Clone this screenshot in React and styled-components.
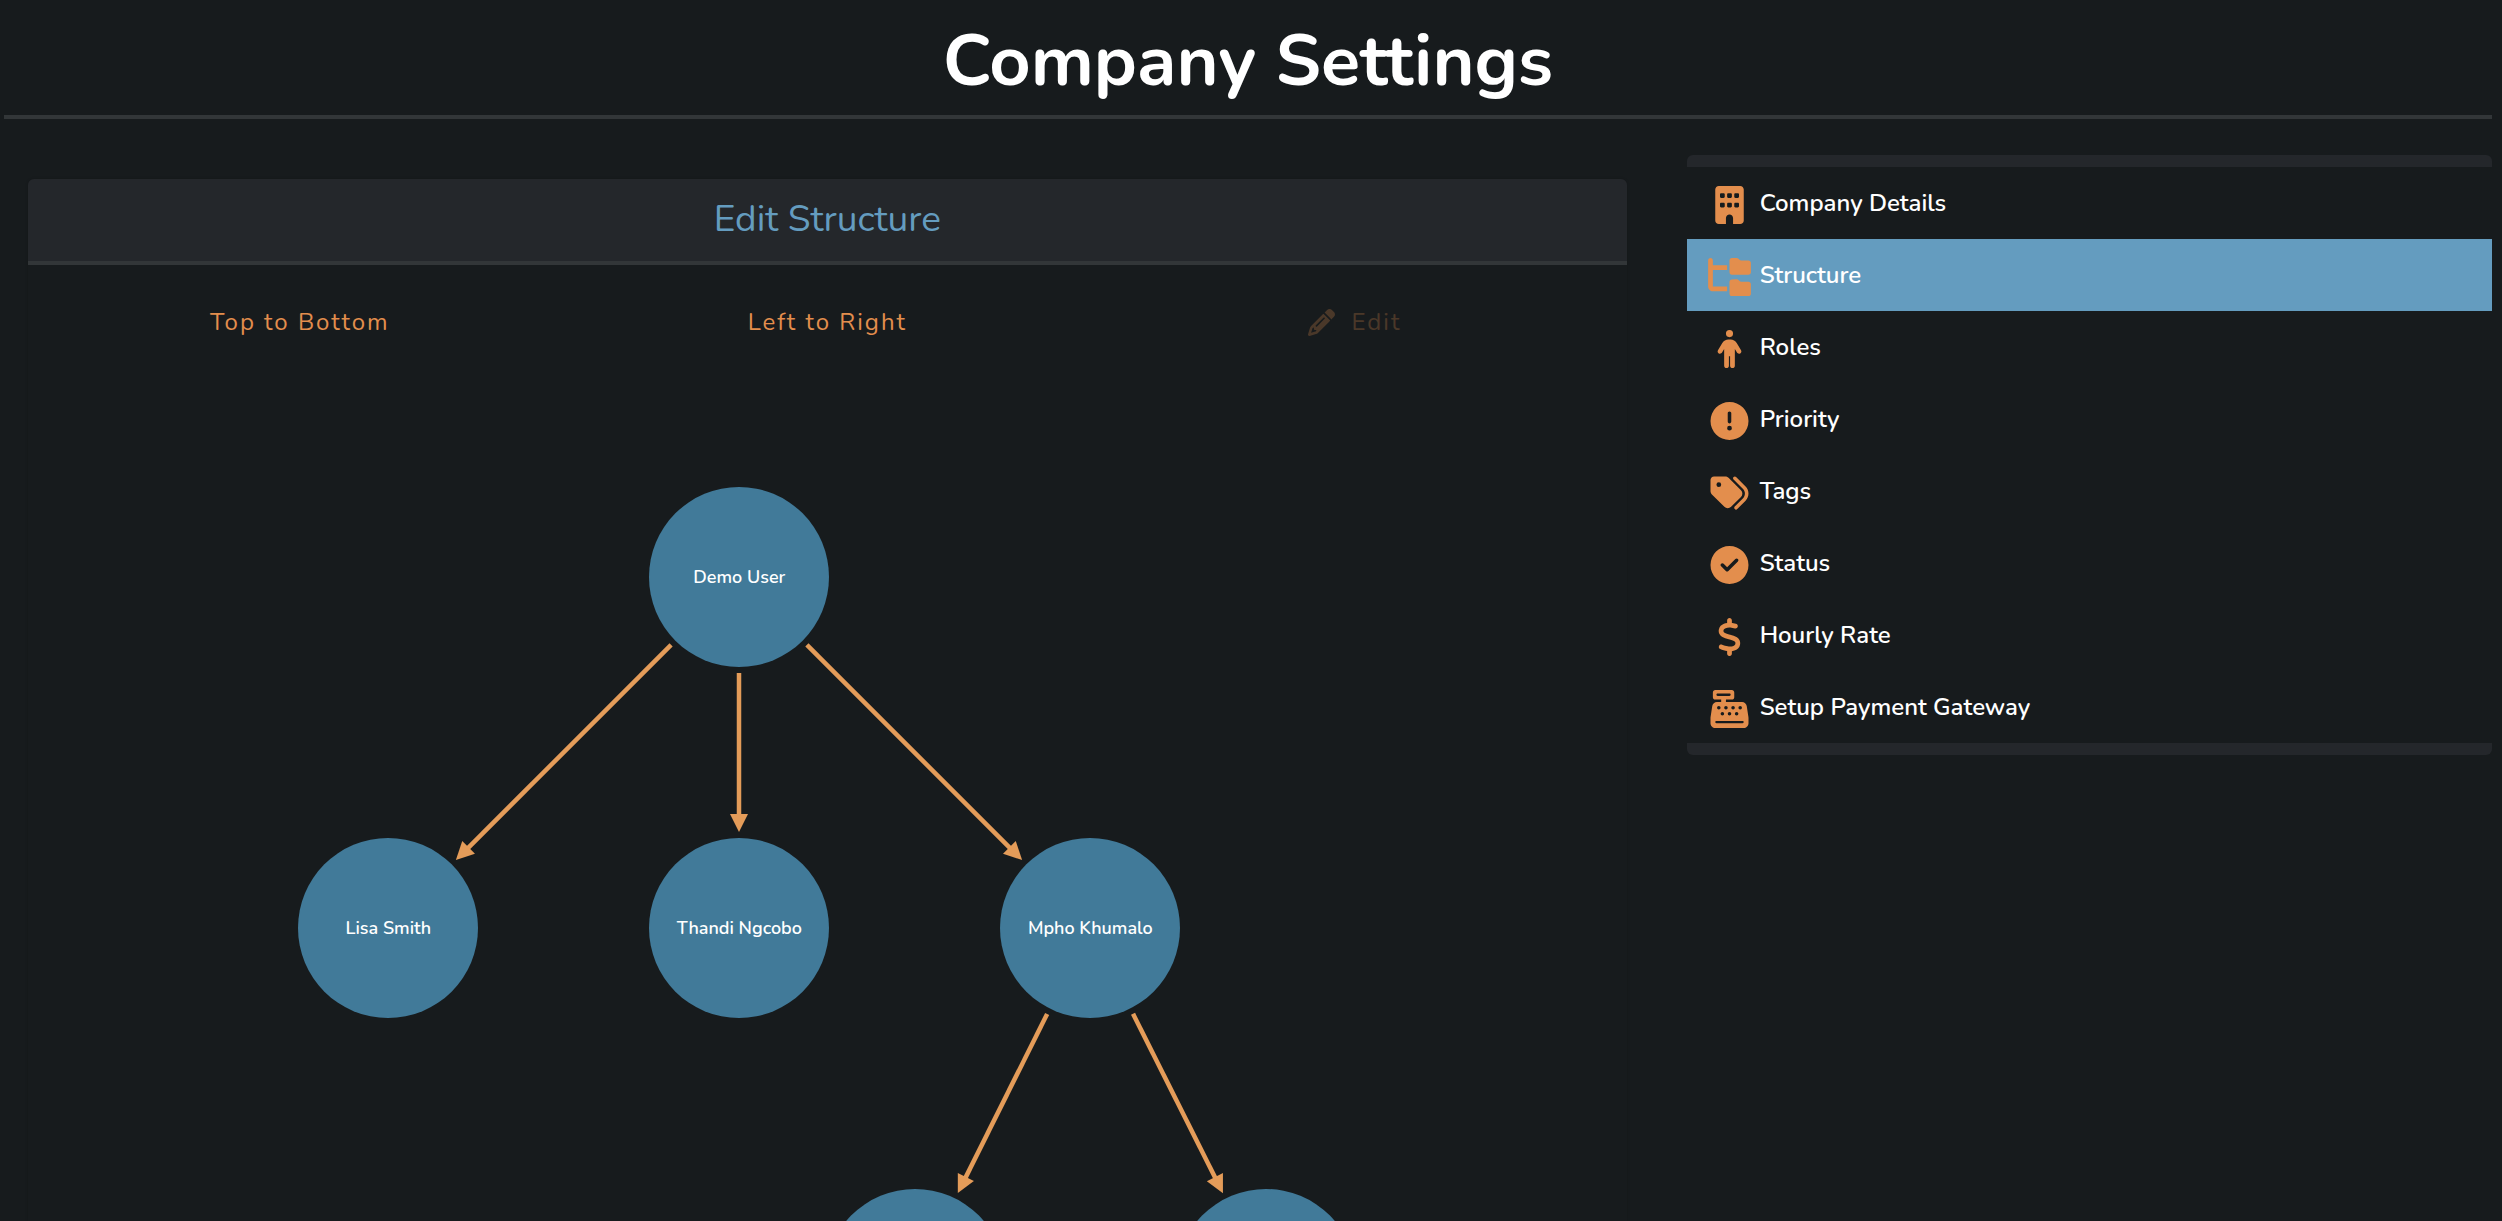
import React from "react";
import styled, { createGlobalStyle } from "styled-components";
import {
  FaBuilding,
  FaFolderTree,
  FaPerson,
  FaCircleExclamation,
  FaTags,
  FaCircleCheck,
  FaDollarSign,
  FaCashRegister,
  FaPencil,
} from "react-icons/fa6";

const color = {
  page: "#171b1d",
  panel: "#24272b",
  rule: "#323638",
  accent: "#e38e4d",
  edge: "#e49c59",
  blue: "#649cbf",
  node: "#417a99",
  text: "#ffffff",
};

const GlobalStyle = createGlobalStyle`
  *, *::before, *::after { box-sizing: border-box; }
  body {
    margin: 0;
    background: ${color.page};
    color: ${color.text};
    font-family: Nunito, "Open Sans", "Noto Sans", sans-serif;
  }
`;

const Page = styled.div`
  height: 100vh;
  overflow: hidden;
  display: flex;
  flex-direction: column;
  padding: 0 10px 0 4px;
`;

const PageHeader = styled.header`
  padding: 16px 0 9px;
  border-bottom: 4px solid ${color.rule};
`;

const PageTitle = styled.h1`
  margin: 0;
  font-size: 72px;
  line-height: 90px;
  font-weight: 700;
  text-align: center;
`;

const Content = styled.div`
  flex: 1;
  min-height: 0;
  display: grid;
  grid-template-columns: 2fr 1fr;
  padding-top: 36px;
`;

const Card = styled.main`
  display: flex;
  flex-direction: column;
  min-width: 0;
  min-height: 0;
  margin: 24px 36px 0 24px;
  border-radius: 6px 6px 0 0;
  box-shadow: 0 0 3px rgba(0, 0, 0, 0.2);
`;

const CardHeader = styled.div`
  padding: 16px 16px 18px;
  background: ${color.panel};
  border-bottom: 4px solid ${color.rule};
  border-radius: 6px 6px 0 0;
`;

const CardTitle = styled.h2`
  margin: 0;
  color: ${color.blue};
  font-size: 37px;
  line-height: 48px;
  font-weight: 400;
  text-align: center;
`;

const Toolbar = styled.div`
  display: grid;
  grid-template-columns: repeat(3, 1fr);
  justify-items: center;
  padding: 32px 8px;
`;

const ToolButton = styled.button`
  display: flex;
  align-items: center;
  gap: 16px;
  padding: 0;
  border: 0;
  background: none;
  color: ${color.accent};
  font: inherit;
  font-size: 24px;
  line-height: 50px;
  letter-spacing: 2px;
  cursor: pointer;

  &:disabled {
    opacity: 0.25;
    cursor: default;
  }
`;

const Canvas = styled.div`
  flex: 1;
  min-height: 0;
  display: flex;
  justify-content: center;
  padding-top: 108px;
  overflow: hidden;
`;

const Tree = styled.div`
  position: relative;
  flex: none;
  width: 1058px;
  height: 882px;
`;

const Edges = styled.svg`
  display: block;
  width: 100%;
  height: 100%;
`;

const Node = styled.div`
  position: absolute;
  width: 180px;
  height: 180px;
  display: flex;
  align-items: center;
  justify-content: center;
  border-radius: 50%;
  background: ${color.node};
  font-size: 18px;
  font-weight: 600;
  white-space: nowrap;
`;

const Sidebar = styled.nav`
  align-self: start;
  margin-left: 24px;
  border: solid ${color.panel};
  border-width: 12px 0;
  border-radius: 6px;
`;

const MenuList = styled.ul`
  margin: 0;
  padding: 0;
  list-style: none;
`;

const MenuLink = styled.a`
  display: flex;
  align-items: center;
  height: 72px;
  padding: 0 13px;
  background: ${(p) => (p.$active ? color.blue : "transparent")};
  color: ${color.text};
  font-size: 24px;
  font-weight: 600;
  text-decoration: none;
`;

const MenuIcon = styled.span`
  display: flex;
  justify-content: center;
  flex: none;
  width: 60px;
  padding-top: 3px;
  color: ${color.accent};

  svg {
    width: 43px;
    height: 38px;
  }
`;

const menu = [
  { label: "Company Details", Icon: FaBuilding },
  { label: "Structure", Icon: FaFolderTree, active: true },
  { label: "Roles", Icon: FaPerson },
  { label: "Priority", Icon: FaCircleExclamation },
  { label: "Tags", Icon: FaTags },
  { label: "Status", Icon: FaCircleCheck },
  { label: "Hourly Rate", Icon: FaDollarSign },
  { label: "Setup Payment Gateway", Icon: FaCashRegister },
];

const nodes = {
  demo: { x: 441, y: 90, label: "Demo User" },
  lisa: { x: 90, y: 441, label: "Lisa Smith" },
  thandi: { x: 441, y: 441, label: "Thandi Ngcobo" },
  mpho: { x: 792, y: 441, label: "Mpho Khumalo" },
  childA: { x: 617, y: 792, label: "" },
  childB: { x: 968, y: 792, label: "" },
};

const links = [
  ["demo", "lisa"],
  ["demo", "thandi"],
  ["demo", "mpho"],
  ["mpho", "childA"],
  ["mpho", "childB"],
];

const RADIUS = 90;
const GAP = 6;
const HEAD = 18;

function Edge({ from, to }) {
  const dx = to.x - from.x;
  const dy = to.y - from.y;
  const distance = Math.hypot(dx, dy);
  const angle = (Math.atan2(dy, dx) * 180) / Math.PI;
  const start = RADIUS + GAP;
  const tip = distance - RADIUS - GAP;
  return (
    <g transform={`translate(${from.x} ${from.y}) rotate(${angle})`} fill={color.edge}>
      <rect x={start} y={-2.25} width={tip - HEAD - start + 1} height={4.5} />
      <path d={`M${tip} 0 l${-HEAD} ${-HEAD / 2} v${HEAD} z`} />
    </g>
  );
}

export default function App() {
  return (
    <Page>
      <GlobalStyle />
      <PageHeader>
        <PageTitle>Company Settings</PageTitle>
      </PageHeader>
      <Content>
        <Card>
          <CardHeader>
            <CardTitle>Edit Structure</CardTitle>
          </CardHeader>
          <Toolbar>
            <ToolButton type="button">Top to Bottom</ToolButton>
            <ToolButton type="button">Left to Right</ToolButton>
            <ToolButton type="button" disabled>
              <FaPencil size={27} aria-hidden="true" />
              Edit
            </ToolButton>
          </Toolbar>
          <Canvas>
            <Tree>
              <Edges viewBox="0 0 1058 882" aria-hidden="true">
                {links.map(([a, b]) => (
                  <Edge key={a + b} from={nodes[a]} to={nodes[b]} />
                ))}
              </Edges>
              {Object.entries(nodes).map(([id, n]) => (
                <Node key={id} style={{ left: n.x - RADIUS, top: n.y - RADIUS }}>
                  {n.label}
                </Node>
              ))}
            </Tree>
          </Canvas>
        </Card>
        <Sidebar aria-label="Settings">
          <MenuList>
            {menu.map(({ label, Icon, active }) => (
              <li key={label}>
                <MenuLink href="#" $active={active} aria-current={active ? "page" : undefined}>
                  <MenuIcon>
                    <Icon aria-hidden="true" />
                  </MenuIcon>
                  {label}
                </MenuLink>
              </li>
            ))}
          </MenuList>
        </Sidebar>
      </Content>
    </Page>
  );
}
